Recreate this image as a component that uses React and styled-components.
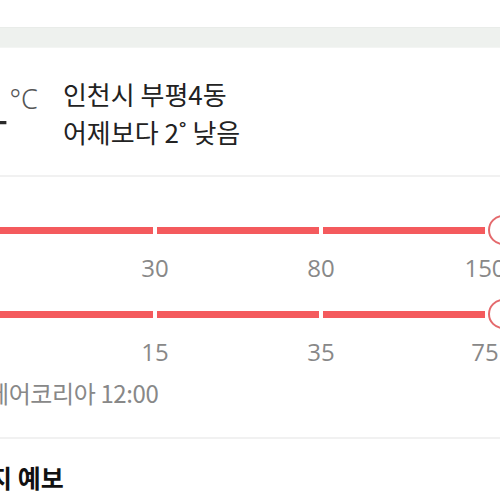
import React from "react";
import styled, { createGlobalStyle } from "styled-components";

const Global = createGlobalStyle`
  html, body { margin: 0; padding: 0; background: #fff; overflow: hidden; }
  body { font-family: "Noto Sans CJK KR", "Noto Sans", sans-serif; color: #222; }
`;

const Frame = styled.div`
  width: 660px;
  margin-left: -100px;
  background: #fff;
`;

const TopSpace = styled.div`
  height: 27px;
  background: #fff;
`;

const GrayBand = styled.div`
  height: 19px;
  background: #eef1ee;
  border-top: 1px solid #e9ece9;
  border-bottom: 1px solid #f3f5f3;
`;

const Header = styled.section`
  display: flex;
  align-items: flex-start;
  padding: 27px 0 24px 72px;
`;

const TempBox = styled.div`
  display: flex;
  align-items: flex-start;
`;

const BigNum = styled.span`
  font-family: Roboto, sans-serif;
  font-weight: 300;
  font-size: 64px;
  line-height: 1;
  color: #2a2a2a;
  margin-top: 8px;
`;

const Unit = styled.span`
  font-family: "Noto Sans", sans-serif;
  font-weight: 300;
  font-size: 27px;
  line-height: 1;
  color: #555;
  margin-left: 2px;
  margin-top: 10px;
`;

const Info = styled.div`
  display: flex;
  flex-direction: column;
  margin-left: 25px;
`;

const InfoLine = styled.div`
  font-size: 26px;
  line-height: 38px;
  color: #222;
  white-space: nowrap;
`;

const Divider = styled.div`
  height: 2px;
  background: #f1f1f1;
`;

const ChartSection = styled.section`
  padding: 38px 0 0 91px;
`;

const BarRow = styled.div`
  display: flex;
  align-items: center;
  height: 30px;
  margin-top: ${(p) => p.$top || 0}px;
`;

const Segments = styled.div`
  display: grid;
  grid-template-columns: repeat(3, 162px);
  column-gap: 4px;
`;

const Segment = styled.div`
  height: 7px;
  background: #f45a5d;
`;

const Marker = styled.div`
  width: 26px;
  height: 26px;
  margin-left: 3px;
  border-radius: 50%;
  border: 2px solid #e4696c;
  background: #fff;
  flex: none;
`;

const LabelRow = styled.div`
  display: grid;
  grid-template-columns: repeat(3, 162px);
  column-gap: 4px;
  margin-top: 10px;
`;

const Label = styled.span`
  justify-self: end;
  font-family: "Open Sans", sans-serif;
  font-size: 24px;
  line-height: 26px;
  color: #888;
  white-space: nowrap;
  transform: translateX(calc(50% + ${(p) => (p.$last ? 0 : 2)}px));
`;

const Source = styled.div`
  padding: 14px 0 30px 87px;
  font-size: 24px;
  line-height: 28px;
  color: #888;
  letter-spacing: -0.4px;
  white-space: nowrap;
`;

const Title = styled.h2`
  margin: 0;
  padding: 23px 0 0 20px;
  font-size: 25px;
  line-height: 30px;
  font-weight: 700;
  color: #111;
  white-space: nowrap;
`;

const charts = [
  { labels: ["30", "80", "150"], top: 0 },
  { labels: ["15", "35", "75"], top: 18 },
];

export default function App() {
  return (
    <>
      <Global />
      <Frame>
        <TopSpace />
        <GrayBand />
        <Header>
          <TempBox>
            <BigNum>4</BigNum>
            <Unit>°C</Unit>
          </TempBox>
          <Info>
            <InfoLine>인천시 부평4동</InfoLine>
            <InfoLine>어제보다 2˚ 낮음</InfoLine>
          </Info>
        </Header>
        <Divider />
        <ChartSection>
          {charts.map((c, i) => (
            <div key={i}>
              <BarRow $top={c.top}>
                <Segments>
                  <Segment />
                  <Segment />
                  <Segment />
                </Segments>
                <Marker />
              </BarRow>
              <LabelRow>
                {c.labels.map((l, j) => (
                  <Label key={l} $last={j === c.labels.length - 1}>
                    {l}
                  </Label>
                ))}
              </LabelRow>
            </div>
          ))}
        </ChartSection>
        <Source>에어코리아 12:00</Source>
        <Divider />
        <Title>미세먼지 예보</Title>
      </Frame>
    </>
  );
}
